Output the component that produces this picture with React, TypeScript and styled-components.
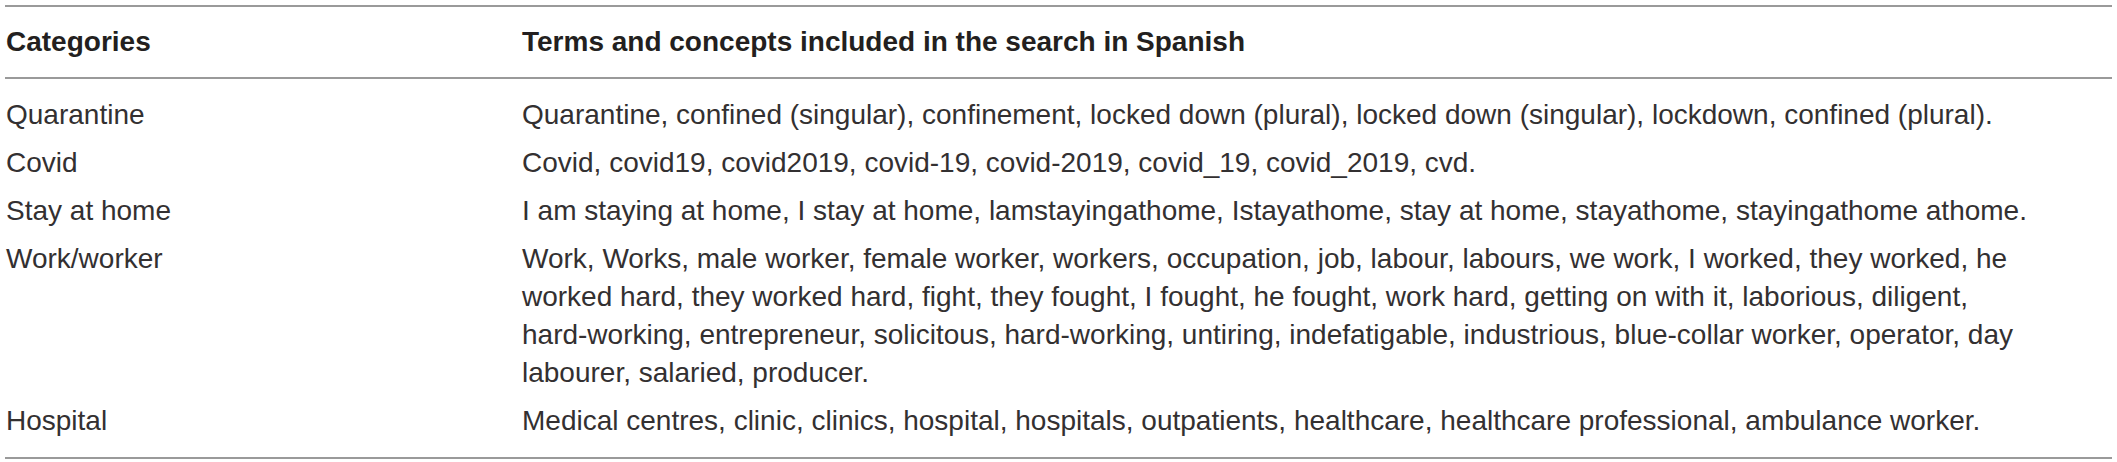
import React from "react";
import styled, { createGlobalStyle } from "styled-components";

const GlobalStyle = createGlobalStyle`
  html, body {
    margin: 0;
    padding: 0;
    background: #ffffff;
  }
  body {
    font-family: "Liberation Sans", Arial, sans-serif;
    color: #231f20;
  }
`;

const Page = styled.div`
  padding: 5px 5px 0 5px;
`;

const Table = styled.table`
  width: 2107px;
  border-collapse: collapse;
  table-layout: fixed;
  border-top: 2px solid #9a9a9a;
  border-bottom: 2px solid #9a9a9a;
  font-family: "Liberation Sans", Arial, sans-serif;
  font-size: 28px;
  line-height: 38px;
  color: #231f20;
`;

const HeadRow = styled.tr`
  border-bottom: 2px solid #9a9a9a;
`;

const HeadCell = styled.th<{ $w?: number }>`
  ${(p) => (p.$w ? `width: ${p.$w}px;` : "")}
  text-align: left;
  font-weight: 700;
  padding: 16px 0 16px 1px;
  color: #231f20;
`;

const Row = styled.tr<{ $first?: boolean; $last?: boolean }>`
  & > td {
    padding-top: ${(p) => (p.$first ? 17 : 5)}px;
    padding-bottom: ${(p) => (p.$last ? 17 : 5)}px;
  }
`;

const Cell = styled.td`
  vertical-align: top;
  padding-left: 1px;
  padding-right: 76px;
  font-weight: 400;
  color: #333031;
`;

const rows: [string, string][] = [
  [
    "Quarantine",
    "Quarantine, confined (singular), confinement, locked down (plural), locked down (singular), lockdown, confined (plural).",
  ],
  [
    "Covid",
    "Covid, covid19, covid2019, covid-19, covid-2019, covid_19, covid_2019, cvd.",
  ],
  [
    "Stay at home",
    "I am staying at home, I stay at home, lamstayingathome, Istayathome, stay at home, stayathome, stayingathome athome.",
  ],
  [
    "Work/worker",
    "Work, Works, male worker, female worker, workers, occupation, job, labour, labours, we work, I worked, they worked, he worked hard, they worked hard, fight, they fought, I fought, he fought, work hard, getting on with it, laborious, diligent, hard-working, entrepreneur, solicitous, hard-working, untiring, indefatigable, industrious, blue-collar worker, operator, day labourer, salaried, producer.",
  ],
  [
    "Hospital",
    "Medical centres, clinic, clinics, hospital, hospitals, outpatients, healthcare, healthcare professional, ambulance worker.",
  ],
];

export default function App() {
  return (
    <>
      <GlobalStyle />
      <Page>
        <Table>
          <thead>
            <HeadRow>
              <HeadCell $w={515}>Categories</HeadCell>
              <HeadCell>Terms and concepts included in the search in Spanish</HeadCell>
            </HeadRow>
          </thead>
          <tbody>
            {rows.map(([cat, terms], i) => (
              <Row key={cat} $first={i === 0} $last={i === rows.length - 1}>
                <Cell>{cat}</Cell>
                <Cell>{terms}</Cell>
              </Row>
            ))}
          </tbody>
        </Table>
      </Page>
    </>
  );
}
